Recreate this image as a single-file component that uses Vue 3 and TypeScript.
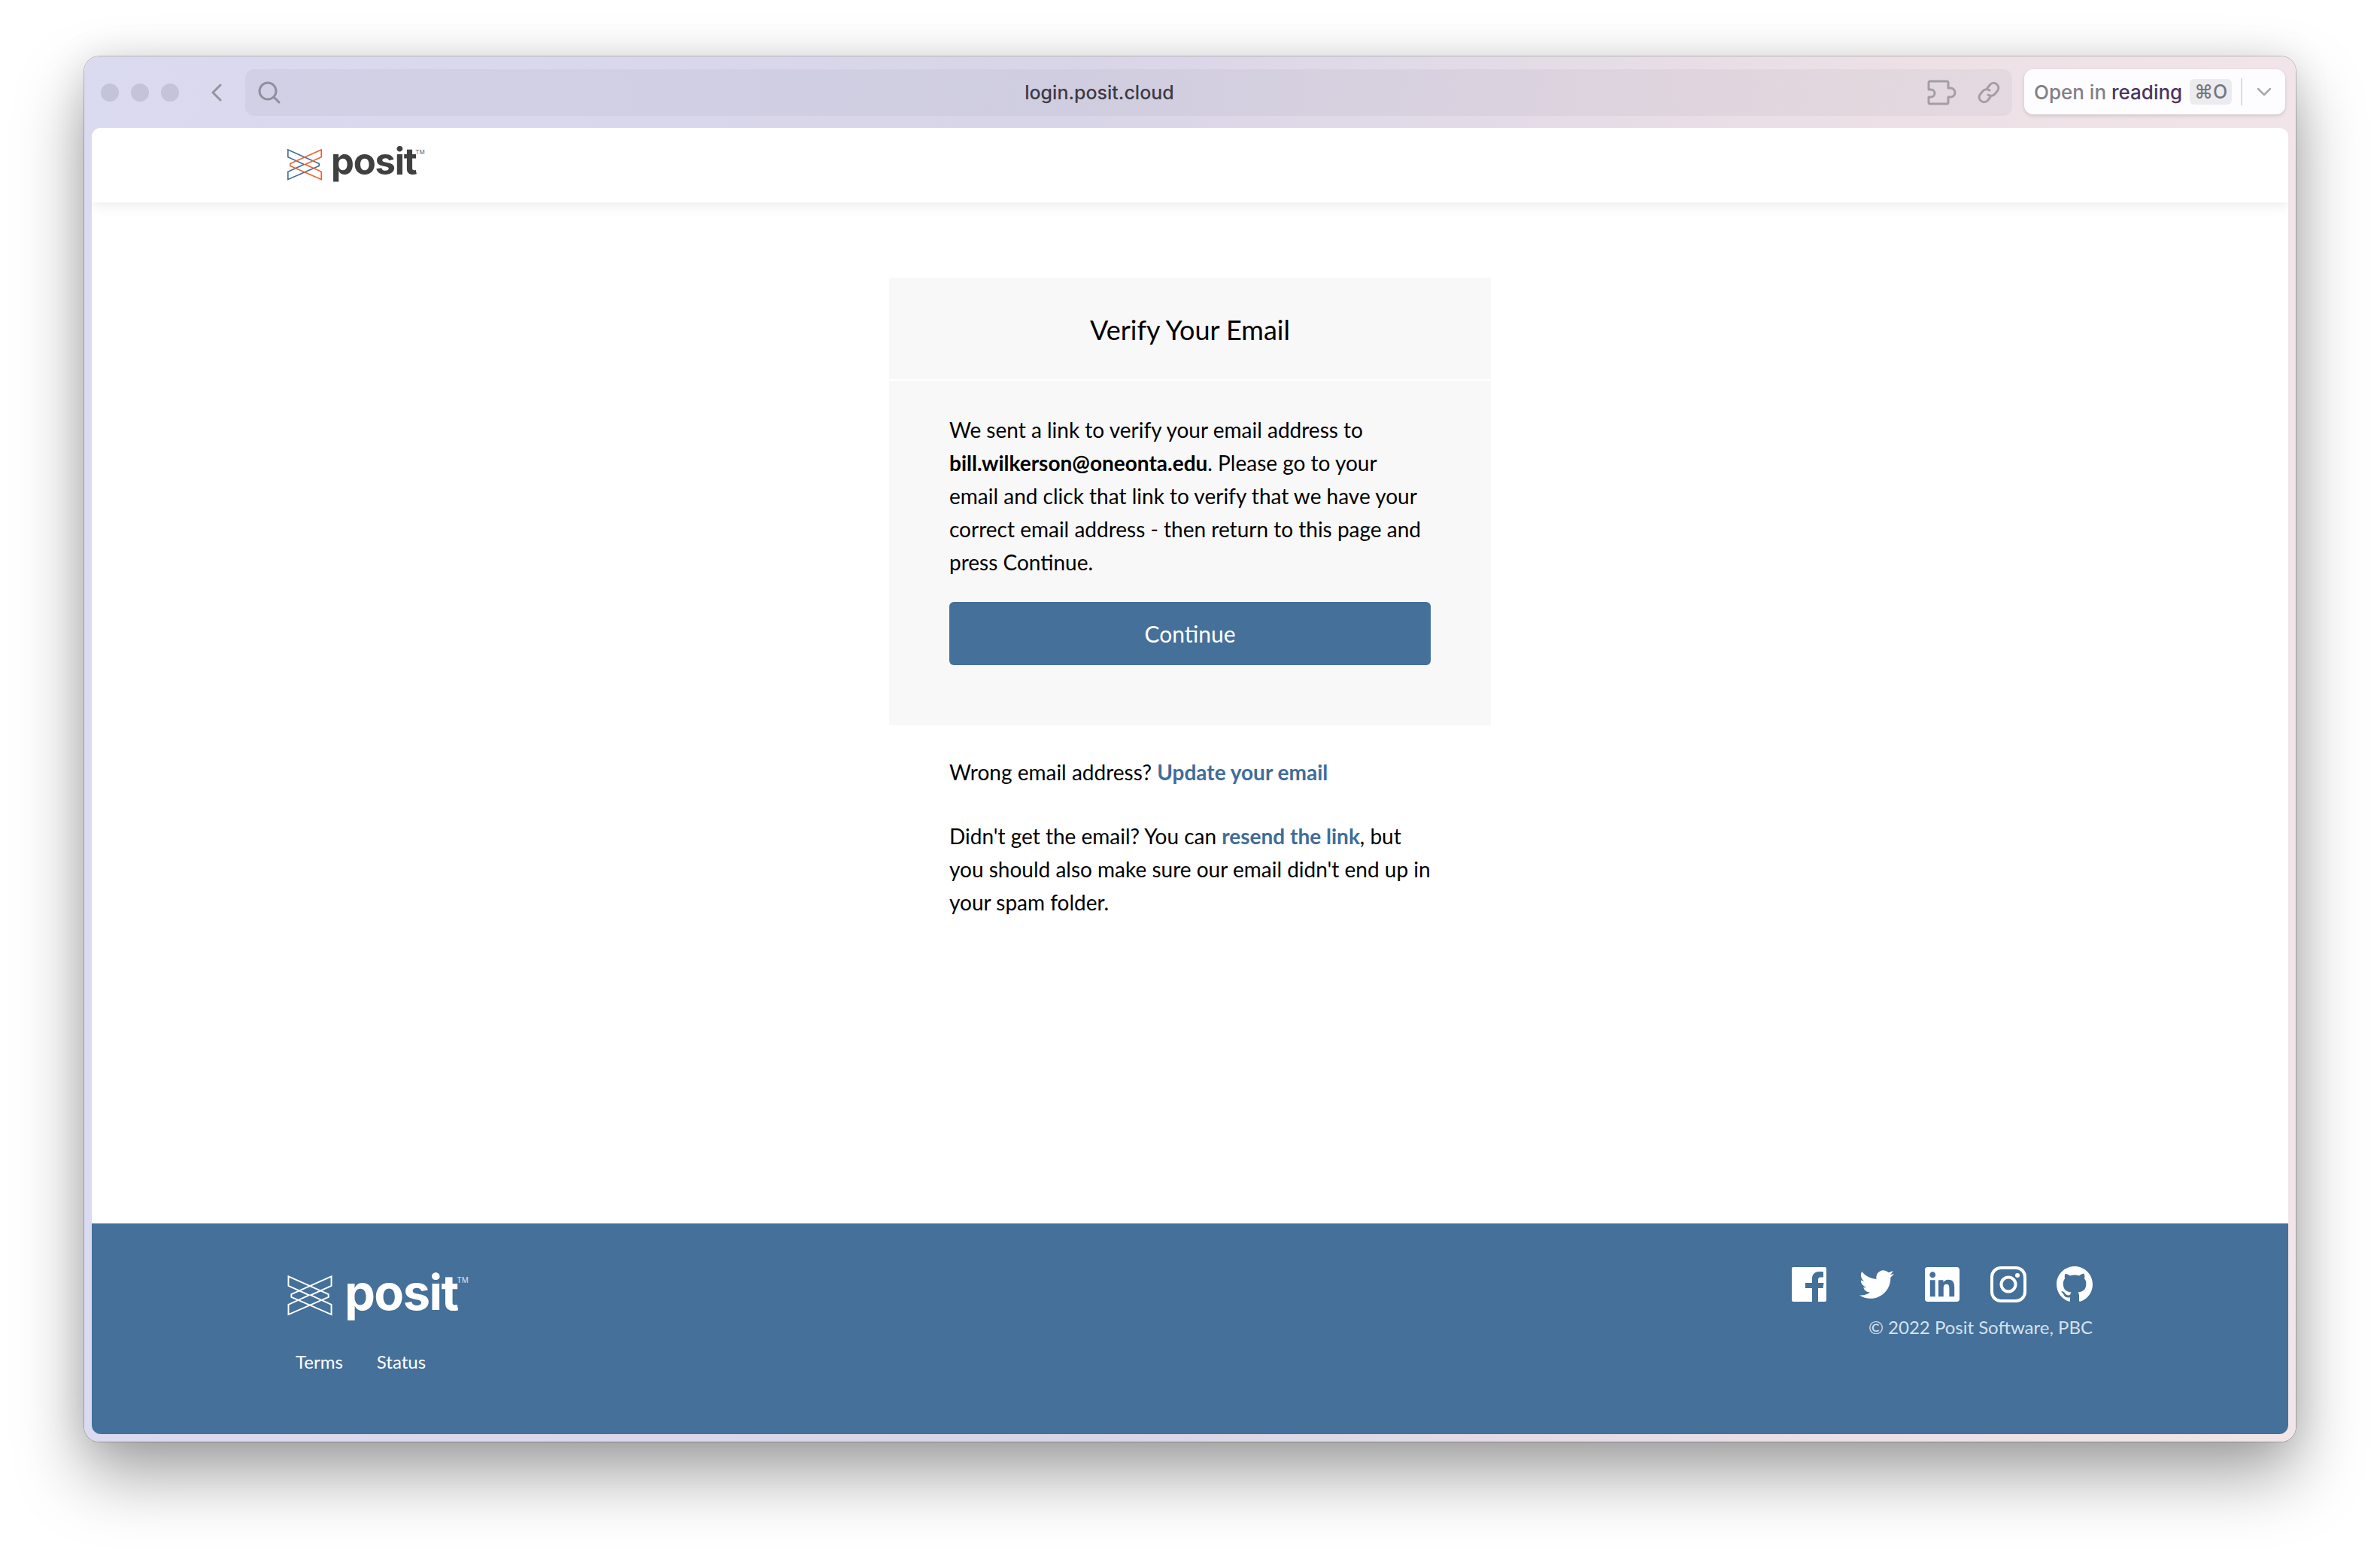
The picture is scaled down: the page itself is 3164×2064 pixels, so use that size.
<script setup lang="ts">
const bodyLines = ['email and click that link to verify that we have your', 'correct email address - then return to this page and', 'press Continue.']
const footerLinks = ['Terms', 'Status']
</script>

<template>
  <div class="page">
    <div class="window">
      <div class="chrome">
        <div class="lights"><span></span><span></span><span></span></div>
        <svg class="back" width="14" height="24" viewBox="0 0 14 24" fill="none" stroke="#94949f" stroke-width="3" stroke-linecap="round" stroke-linejoin="round"><path d="M12 2 2 12l10 10" /></svg>
        <div class="address">
          <svg class="search" width="32" height="32" viewBox="0 0 32 32" fill="none" stroke="#8f8f9f" stroke-width="3" stroke-linecap="round"><circle cx="14" cy="14" r="11" /><path d="m22 22 7 7" /></svg>
          <span class="url">login.posit.cloud</span>
          <svg width="40" height="34" viewBox="0 0 40 34" fill="none" stroke="#a39da4" stroke-width="3" stroke-linejoin="round"><path d="M2 4a2 2 0 0 1 2-2h22a2 2 0 0 1 2 2v7h3a6 6 0 0 1 0 12h-3v7a2 2 0 0 1-2 2H4a2 2 0 0 1-2-2v-7h3a5 5 0 0 0 0-10H2z" /></svg>
          <svg width="30" height="32" viewBox="0 0 30 32" fill="none" stroke="#a39da4" stroke-width="3" stroke-linecap="round"><path d="M13 10l4-5a6.500 6.500 0 0 1 10 8l-4 5a6.500 6.500 0 0 1-9 1" /><path d="M17 22l-4 5a6.500 6.500 0 0 1-10-8l4-5a6.500 6.500 0 0 1 9-1" /></svg>
        </div>
        <div class="reading">
          <span class="open">Open in <b>reading</b></span>
          <kbd>⌘O</kbd>
          <i class="divider"></i>
          <svg width="20" height="12" viewBox="0 0 20 12" fill="none" stroke="#aaa" stroke-width="2.500" stroke-linecap="round" stroke-linejoin="round"><path d="m2 2 8 8 8-8" /></svg>
        </div>
      </div>

      <div class="site">
        <header class="nav">
          <a class="logo logo--nav">
            <svg class="mark" width="46" height="42" viewBox="0 0 46 42" fill="none" stroke-width="1.700">
              <path stroke="#447099" d="M.8 1 42.200 19.500v3L.8 40.500V30.200L22.200 20.500.8 10.700z" />
              <path stroke="#ee6331" d="M45.200 1 3.800 19.500v3L45.200 40.500V30.200L23.800 20.500 45.200 10.700z" />
            </svg>
            <span class="word">posit<sup>TM</sup></span>
          </a>
        </header>

        <main class="main">
          <section class="card">
            <h1>Verify Your Email</h1>
            <div class="card__body">
              <p>We sent a link to verify your email address to<br /><strong>bill.wilkerson@oneonta.edu</strong>. Please go to your<br /><template v-for="line in bodyLines" :key="line">{{ line }}<br /></template></p>
              <button type="button">Continue</button>
            </div>
          </section>
          <div class="notes">
            <p>Wrong email address? <a>Update your email</a></p>
            <p>Didn't get the email? You can <a>resend the link</a>, but<br />you should also make sure our email didn't end up in<br />your spam folder.</p>
          </div>
        </main>

        <footer class="footer">
          <div class="footer__left">
            <a class="logo logo--footer">
              <svg class="mark" width="60" height="54" viewBox="0 0 46 42" fill="none" stroke="#fff" stroke-width="1.500">
                <path d="M.8 1 42.200 19.500v3L.8 40.500V30.200L22.200 20.500.8 10.700z" />
                <path d="M45.200 1 3.800 19.500v3L45.200 40.500V30.200L23.800 20.500 45.200 10.700z" />
              </svg>
              <span class="word">posit<sup>TM</sup></span>
            </a>
            <nav class="links"><a v-for="link in footerLinks" :key="link">{{ link }}</a></nav>
          </div>
          <div class="footer__right">
            <div class="social">
              <svg class="fb" width="46" height="46" viewBox="0 0 46 46" fill="#fff"><path d="M2 0h42a2 2 0 0 1 2 2v42a2 2 0 0 1-2 2H35V28h6.500l1-7H35v-4c0-2.200.8-3.500 3.600-3.500H42V6.300c-1-.2-3-.4-5.200-.4-5.400 0-9.800 3.200-9.800 9.400V21h-9v7h9v18H2a2 2 0 0 1-2-2V2a2 2 0 0 1 2-2z" /></svg>
              <svg width="46" height="46" viewBox="0 0 24 24" fill="#fff"><path d="M23.953 4.570a10 10 0 0 1-2.825.775 4.958 4.958 0 0 0 2.163-2.723c-.951.555-2.005.959-3.127 1.184a4.920 4.920 0 0 0-8.384 4.482C7.690 8.095 4.067 6.130 1.640 3.162a4.822 4.822 0 0 0-.666 2.475c0 1.710.870 3.213 2.188 4.096a4.904 4.904 0 0 1-2.228-.616v.060a4.923 4.923 0 0 0 3.946 4.827 4.996 4.996 0 0 1-2.212.085 4.936 4.936 0 0 0 4.604 3.417 9.867 9.867 0 0 1-6.102 2.105c-.390 0-.779-.023-1.170-.067a13.995 13.995 0 0 0 7.557 2.209c9.053 0 13.998-7.496 13.998-13.985 0-.210 0-.420-.015-.630A9.935 9.935 0 0 0 24 4.590z" /></svg>
              <svg width="46" height="46" viewBox="0 0 24 24" fill="#fff"><path d="M20.447 20.452h-3.554v-5.569c0-1.328-.027-3.037-1.852-3.037-1.853 0-2.136 1.445-2.136 2.939v5.667H9.351V9h3.414v1.561h.046c.477-.900 1.637-1.850 3.370-1.850 3.601 0 4.267 2.370 4.267 5.455v6.286zM5.337 7.433c-1.144 0-2.063-.926-2.063-2.065 0-1.138.920-2.063 2.063-2.063 1.140 0 2.064.925 2.064 2.063 0 1.139-.925 2.065-2.064 2.065zm1.782 13.019H3.555V9h3.564v11.452zM22.225 0H1.771C.792 0 0 .774 0 1.729v20.542C0 23.227.792 24 1.771 24h20.451C23.200 24 24 23.227 24 22.271V1.729C24 .774 23.200 0 22.222 0h.003z" /></svg>
              <svg width="48" height="48" viewBox="0 0 48 48" fill="none" stroke="#fff" stroke-width="4"><rect x="2" y="2" width="44" height="44" rx="12" /><circle cx="24" cy="24" r="9.500" /><circle cx="36" cy="12" r="3" fill="#fff" stroke="none" /></svg>
              <svg class="gh" width="48" height="48" viewBox="0 0 16 16" fill="#fff"><path d="M8 0C3.580 0 0 3.580 0 8c0 3.540 2.290 6.530 5.470 7.590.400.070.550-.170.550-.380 0-.190-.010-.820-.010-1.490-2.010.370-2.530-.490-2.690-.940-.090-.230-.480-.940-.820-1.130-.280-.150-.680-.520-.010-.530.630-.010 1.080.580 1.230.820.720 1.210 1.870.870 2.330.660.070-.520.280-.870.510-1.070-1.780-.200-3.640-.890-3.640-3.950 0-.870.310-1.590.820-2.150-.080-.200-.360-1.020.080-2.120 0 0 .670-.210 2.200.820.640-.180 1.320-.270 2-.270.680 0 1.360.090 2 .270 1.530-1.040 2.200-.820 2.200-.820.440 1.100.160 1.920.080 2.120.510.560.820 1.270.820 2.150 0 3.070-1.870 3.750-3.650 3.950.290.250.540.730.540 1.480 0 1.070-.010 1.930-.010 2.200 0 .210.150.460.550.380A8.013 8.013 0 0 0 16 8c0-4.420-3.580-8-8-8z" /></svg>
            </div>
            <p class="copyright">© 2022 Posit Software, PBC</p>
          </div>
        </footer>
      </div>
    </div>
  </div>
</template>

<style scoped>
.page {
  box-sizing: border-box;
  width: 3164px;
  height: 2064px;
  padding: 75px 112px 148px;
  background: #fff;
  overflow: hidden;
}

.window {
  display: flex;
  flex-direction: column;
  height: 100%;
  padding: 0 10px 10px;
  box-sizing: border-box;
  border-radius: 20px;
  background: linear-gradient(90deg, #dadaf0 0%, #d9d5e8 45%, #ece0e6 80%, #f1e5e9 100%);
  box-shadow: 0 0 0 1px rgba(0, 0, 0, 0.22), 0 44px 90px rgba(0, 0, 0, 0.36), 0 0 50px rgba(0, 0, 0, 0.1);
}

.chrome {
  display: flex;
  align-items: flex-start;
  box-sizing: border-box;
  height: 95px;
  padding-top: 17px;
  flex: none;
}

.lights {
  display: flex;
  gap: 16px;
  margin: 19px 0 0 12px;
}
.lights span {
  width: 24px;
  height: 24px;
  border-radius: 50%;
  background: #c3c3da;
}

.back {
  margin: 19px 0 0 43px;
}

.address {
  display: flex;
  align-items: center;
  position: relative;
  width: 2349px;
  height: 62px;
  margin-left: 31px;
  padding: 0 16px;
  box-sizing: border-box;
  border-radius: 12px;
  background: rgba(60, 50, 80, 0.05);
  gap: 27px;
}
.search {
  margin-right: auto;
}
.url {
  position: absolute;
  left: 0;
  right: 78px;
  text-align: center;
  font: 500 25px Inter, sans-serif;
  color: #3d3a45;
}

.reading {
  display: flex;
  align-items: center;
  width: 347px;
  height: 60px;
  margin-left: 16px;
  padding-left: 13px;
  box-sizing: border-box;
  border-radius: 12px;
  background: #fdfcff;
  box-shadow: 0 2px 5px rgba(0, 0, 0, 0.14);
  font: 500 26px Inter, sans-serif;
  color: #818085;
}
.open b {
  font-weight: 500;
  color: #4a3560;
}
kbd {
  box-sizing: border-box;
  width: 56px;
  height: 34px;
  margin-left: 10px;
  text-align: center;
  border-radius: 6px;
  background: #ececee;
  font: 500 25px/34px Inter, "DejaVu Sans", sans-serif;
  color: #77767c;
}
.divider {
  width: 2px;
  height: 36px;
  margin: 0 19px 0 12px;
  background: #dcdce0;
}

.site {
  flex: 1;
  display: flex;
  flex-direction: column;
  border-radius: 12px;
  background: #fff;
  overflow: hidden;
  font: 400 28px/44px Lato, sans-serif;
  color: #000;
}

.nav {
  height: 99px;
  flex: none;
  display: flex;
  align-items: flex-start;
  padding-left: 260px;
  background: #fff;
  box-shadow: 0 4px 16px rgba(0, 0, 0, 0.08);
  position: relative;
}

.logo {
  display: flex;
  align-items: flex-start;
}
.word {
  font-family: Inter, sans-serif;
  font-weight: 700;
  position: relative;
}
.word sup {
  position: absolute;
  font-size: 8px;
  line-height: 8px;
  font-weight: 400;
  letter-spacing: 0;
  opacity: 0.8;
}
.logo--nav {
  padding-top: 28px;
}
.logo--nav .word {
  margin-left: 12px;
  font-size: 49px;
  line-height: 50px;
  letter-spacing: -1.2px;
  margin-top: -8px;
  color: #404041;
}
.logo--nav sup {
  top: 8px;
  right: -11px;
}
.logo--footer {
  padding-top: 69px;
}
.logo--footer .word {
  margin-left: 16px;
  font-size: 65px;
  line-height: 66px;
  letter-spacing: -1.6px;
  margin-top: -10px;
  color: #fff;
}
.logo--footer sup {
  top: 12px;
  right: -14px;
  font-size: 10px;
}

.main {
  flex: 1;
  display: flex;
  flex-direction: column;
  align-items: center;
  padding-top: 100px;
}

.card {
  width: 800px;
  background: #f8f8f8;
}
.card h1 {
  margin: 0;
  height: 135px;
  border-bottom: 2px solid #fff;
  font: 400 36px/138px Lato, sans-serif;
  text-align: center;
}
.card__body {
  padding: 43px 80px 80px;
}
.card__body p {
  margin: 0;
}
.card__body button {
  display: block;
  width: 640px;
  height: 84px;
  margin-top: 31px;
  border: 0;
  border-radius: 6px;
  background: #447099;
  color: #fff;
  font: 400 30px Lato, sans-serif;
}

.notes {
  width: 640px;
  padding-top: 40px;
}
.notes p {
  margin: 0 0 41px;
}
.notes a {
  color: #3f6d9b;
  font-weight: 700;
}

.footer {
  height: 280px;
  flex: none;
  display: flex;
  justify-content: space-between;
  padding: 0 260px;
  background: #447099;
  color: #fff;
}
.links {
  display: flex;
  gap: 45px;
  margin: 44px 0 0 11px;
  font-size: 24px;
  line-height: 30px;
}
.footer__right {
  display: flex;
  flex-direction: column;
  align-items: flex-end;
  padding-top: 57px;
}
.social {
  display: flex;
  align-items: center;
  gap: 41px;
}
.fb {
  margin-right: 3px;
}
.gh {
  margin-left: -1px;
}
.copyright {
  margin: 15px 0 0;
  font-size: 24px;
  line-height: 36px;
  color: #d4e2ef;
}
</style>

<style>
body {
  margin: 0;
}
</style>
